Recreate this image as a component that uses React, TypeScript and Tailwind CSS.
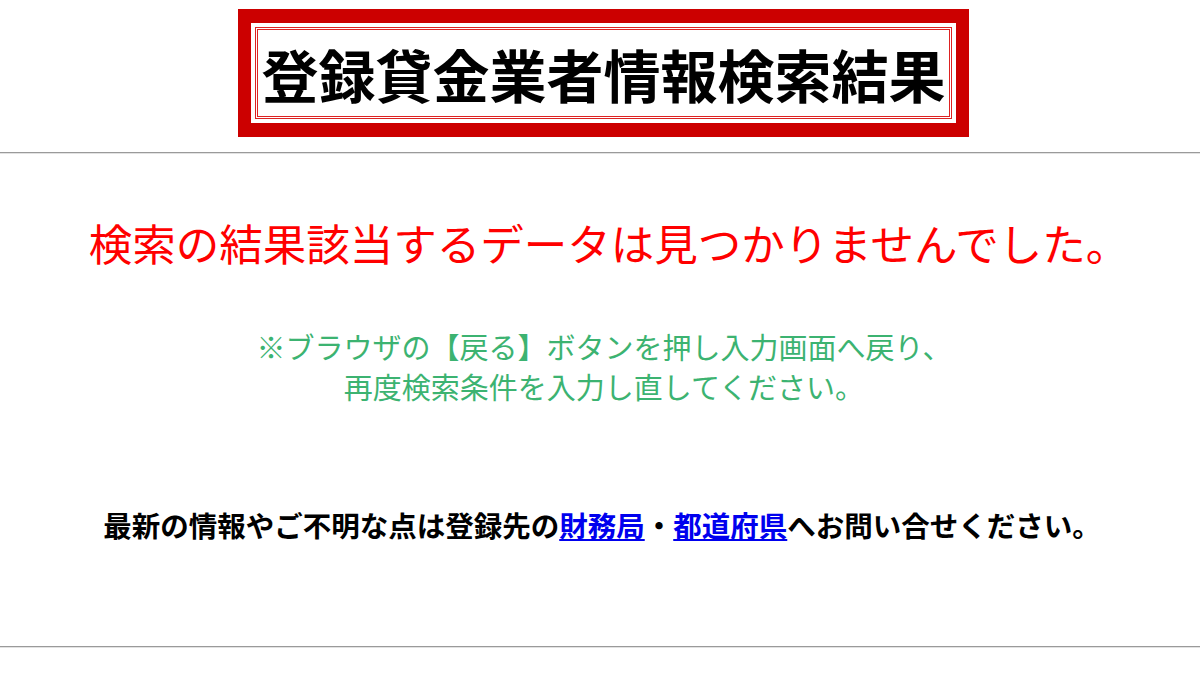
export default function App() {
  return (
    <div
      className="min-h-screen bg-white text-black"
      style={{ fontFamily: '"Noto Sans CJK JP", "Noto Sans", sans-serif' }}
    >
      {/* Title banner */}
      <div className="flex justify-center pt-[9px] pl-[7px]">
        <div className="bg-[#cc0000] px-[13px] py-[14px]">
          <div className="bg-white p-[4px]">
            <div className="border-[3px] border-double border-[#dd2222] h-[92px] w-[697px] flex items-center justify-center">
              <h1 className="text-[57px] font-bold leading-none tracking-[0px]">
                登録貸金業者情報検索結果
              </h1>
            </div>
          </div>
        </div>
      </div>

      <hr className="mt-[15px] border-0 border-t border-b border-t-[#9a9a9a] border-b-[#e2e2e2]" />

      {/* Result message */}
      <p className="mt-[57px] pl-[18px] text-center text-[43.5px] leading-[63px] text-[#ff0000]">
        検索の結果該当するデータは見つかりませんでした。
      </p>

      <p className="mt-[52px] pl-[8px] text-center text-[29px] leading-[40px] text-[#3cb371]">
        ※ブラウザの【戻る】ボタンを押し入力画面へ戻り、
        <br />
        再度検索条件を入力し直してください。
      </p>

      <p className="mt-[99px] pl-[4px] text-center text-[28.5px] leading-[40px] font-bold">
        最新の情報やご不明な点は登録先の
        <a href="#" className="text-[#0000ee] underline">
          財務局
        </a>
        ・
        <a href="#" className="text-[#0000ee] underline">
          都道府県
        </a>
        へお問い合せください。
      </p>

      <hr className="mt-[101px] border-0 border-t border-b border-t-[#9a9a9a] border-b-[#e2e2e2]" />
    </div>
  )
}
